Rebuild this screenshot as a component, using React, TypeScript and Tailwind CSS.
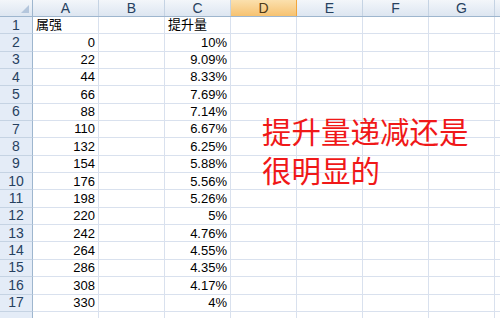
const cols = ['A', 'B', 'C', 'D', 'E', 'F', 'G', '']

const data: [string, string][] = [
  ['属强', '提升量'],
  ['0', '10%'],
  ['22', '9.09%'],
  ['44', '8.33%'],
  ['66', '7.69%'],
  ['88', '7.14%'],
  ['110', '6.67%'],
  ['132', '6.25%'],
  ['154', '5.88%'],
  ['176', '5.56%'],
  ['198', '5.26%'],
  ['220', '5%'],
  ['242', '4.76%'],
  ['264', '4.55%'],
  ['286', '4.35%'],
  ['308', '4.17%'],
  ['330', '4%'],
  ['', ''],
]

const font = { fontFamily: '"Liberation Sans", "Noto Sans CJK SC", sans-serif' }

export default function App() {
  return (
    <div className="relative w-[500px] h-[318px] overflow-hidden bg-white text-[13px] text-black" style={font}>
      {/* header row */}
      <div className="flex h-[17px] border-b border-[#9eb6ce] text-[14px]">
        <div className="relative w-[33px] shrink-0 border-r border-[#9eb6ce] bg-gradient-to-b from-[#f3f6fa] to-[#dde6f1]">
          <div className="absolute right-[3px] bottom-[3px] w-0 h-0 border-l-[8px] border-l-transparent border-b-[8px] border-b-[#b4c6dc]"></div>
        </div>
        {cols.map((c, i) => (
          <div
            key={i}
            className={
              c === 'D'
                ? 'w-[66px] shrink-0 flex items-center justify-center border-r border-[#f2a63c] bg-gradient-to-b from-[#fbe0ad] to-[#f6c270] text-[#4d3a17]'
                : 'w-[66px] shrink-0 flex items-center justify-center border-r border-[#c5d3e3] bg-gradient-to-b from-[#f3f6fa] to-[#dde6f1] text-[#27415f]'
            }
          >
            {c}
          </div>
        ))}
      </div>

      {/* rows */}
      {data.map(([a, c], i) => (
        <div key={i} className="flex h-[17.35px]">
          <div className="w-[33px] shrink-0 flex items-center justify-center border-r border-b border-[#9eb6ce] border-b-[#c5d3e3] bg-[#e4ecf7] text-[#27415f] text-[14px]">
            {i < 17 ? i + 1 : ''}
          </div>
          <div className={`w-[66px] shrink-0 flex items-center px-[3px] border-r border-b border-[#d9e1ee] ${i === 0 ? 'justify-start' : 'justify-end'}`}>
            {a}
          </div>
          <div className="w-[66px] shrink-0 border-r border-b border-[#d9e1ee]"></div>
          <div className={`w-[66px] shrink-0 flex items-center px-[3px] border-r border-b border-[#d9e1ee] ${i === 0 ? 'justify-start' : 'justify-end'}`}>
            {c}
          </div>
          <div className="w-[66px] shrink-0 border-r border-b border-[#d9e1ee]"></div>
          <div className="w-[66px] shrink-0 border-r border-b border-[#d9e1ee]"></div>
          <div className="w-[66px] shrink-0 border-r border-b border-[#d9e1ee]"></div>
          <div className="w-[66px] shrink-0 border-r border-b border-[#d9e1ee]"></div>
          <div className="w-[66px] shrink-0 border-r border-b border-[#d9e1ee]"></div>
        </div>
      ))}

      {/* text box over the grid */}
      <div
        className="absolute left-[262px] top-[111px] text-[29.5px] leading-[39px] text-[#f01818]"
        style={{ fontFamily: '"Noto Sans CJK SC", sans-serif' }}
      >
        <div>提升量递减还是</div>
        <div>很明显的</div>
      </div>
    </div>
  )
}
